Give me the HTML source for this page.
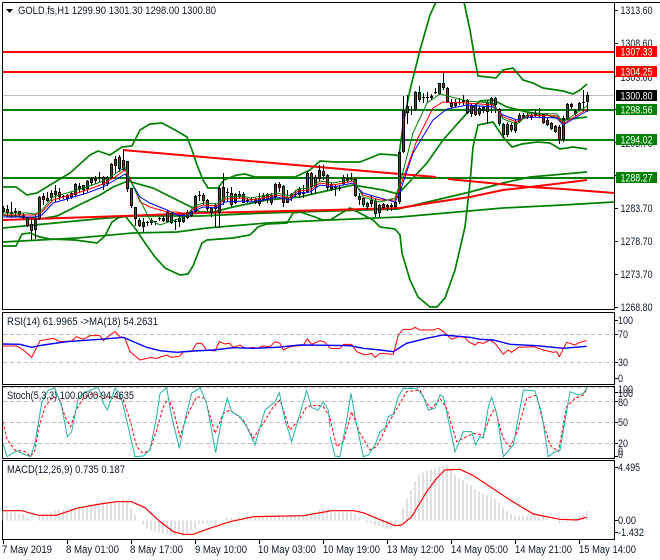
<!DOCTYPE html>
<html><head><meta charset="utf-8"><title>GOLD.fs H1</title>
<style>
html,body{margin:0;padding:0;background:#fff;width:660px;height:560px;overflow:hidden}
svg{display:block}
text{font-family:"Liberation Sans",sans-serif;font-size:11px;fill:#0a1a2a}
.w text{fill:#fff}
.n{fill:none;vector-effect:non-scaling-stroke}
</style></head><body>
<svg width="660" height="560" viewBox="0 0 660 560" xmlns="http://www.w3.org/2000/svg">
<defs><clipPath id="m"><rect x="3" y="3" width="611" height="306"/></clipPath>
<clipPath id="s"><rect x="3" y="387" width="611" height="71"/></clipPath></defs>
<g clip-path="url(#m)" fill="none">
<path d="M3 95.5H614" stroke="#c0c0c0"/>
<path d="M3 52H614M3 72H614" stroke="#ff0000" stroke-width="2"/>
<path d="M3 110H614M3 140H614M3 178H614" stroke="#008000" stroke-width="2"/>
<g stroke="#008000" stroke-width="1.7">
<path d="M3 187L16 187L27 195L37 193L50 185L70 173L90 155L98 151L110 155L122 147L132 146L140 130L150 124L162 123L175 130L187 137L192 150L197 165L203 180L208 188L218 188L224 180L237 175L245 174L255 177L295 177L310 170L320 161L335 162L360 162L380 154L395 155L399 156L403 125L410 90L420 50L430 15L436 2M464 2L470 30L475 60L478 76L496 78L503 70L513 68L523 80L533 83L543 88L563 91L573 94L580 90L587 84"/>
<path d="M3 246L16 246L22 234L30 233L40 237L50 239L75 240L97 243L105 236L112 222L118 218L125 216L135 228L145 243L155 257L165 268L180 275L188 274L193 266L202 243L207 240L233 238L250 235L258 227L267 224L287 223L293 213L300 212L315 217L323 220L330 220L350 208L373 220L380 227L395 229L400 235L402 253L410 280L418 297L430 307L437 307L445 298L455 270L465 227L470 183L473 147L478 125L493 122L503 137L512 147L522 144L537 142L550 143L560 149L573 147L587 149"/>
<path d="M3 242L77 238L133 233L177 232L207 228L267 223L330 220L400 217L503 208L563 205L614 202"/>
<path d="M3 228L107 218L133 216L200 216L267 213L330 211L398 209L470 192L503 183L530 177L587 172"/>
<path d="M3 215L40 219L57 216L83 203L100 195L113 187L128 181L153 188L193 208L200 212L213 212L233 207L267 200L300 197L317 193L353 185L383 190L398 194L400 192L427 163L443 140L467 113L480 101L493 100L507 107L527 112L547 115L563 120L587 117"/>
</g>
<g stroke="#ff0000" stroke-width="2">
<path d="M123 150L330 168L400 174L436 177M448 179L500 184L530 187L563 189L614 193"/>
<path d="M3 220L123 216L200 213L330 210L400 208L430 203L470 197L503 190L530 187L563 183L587 180"/>
</g>
<g shape-rendering="crispEdges">
<path stroke="#000" d="M3.5 206V213M7.5 205V217M11.5 202V218M15.5 208V217M19.5 211V217M23.5 213V219M27.5 217V227M31.5 218V240M35.5 215V239M39.5 196V220M43.5 193V205M47.5 192V202M51.5 190V201M55.5 185V202M59.5 188V200M63.5 195V199M67.5 194V201M71.5 192V199M75.5 183V196M79.5 183V193M83.5 185V195M87.5 180V192M91.5 177V185M95.5 176V184M99.5 172V182M103.5 176V190M107.5 176V186M111.5 163V179M115.5 156V173M119.5 155V172M123.5 149V171M127.5 161V192M131.5 188V208M135.5 207V226M139.5 218V227M143.5 218V232M147.5 221V226M151.5 218V225M155.5 221V225M159.5 217V221M163.5 216V222M167.5 210V223M171.5 213V224M175.5 219V230M179.5 215V227M183.5 213V223M187.5 210V219M191.5 210V217M195.5 195V213M199.5 191V201M203.5 193V205M207.5 199V213M211.5 207V217M215.5 203V227M219.5 187V228M223.5 173V205M227.5 188V202M231.5 187V207M235.5 193V204M239.5 191V199M243.5 192V203M247.5 198V203M251.5 197V201M255.5 198V204M259.5 193V206M263.5 193V201M267.5 193V203M271.5 193V205M275.5 183V199M279.5 182V192M283.5 185V207M287.5 190V203M291.5 193V201M295.5 190V197M299.5 187V198M303.5 185V198M307.5 171V193M311.5 172V195M315.5 175V194M319.5 165V182M323.5 165V180M327.5 174V191M331.5 183V191M335.5 185V196M339.5 185V191M343.5 175V185M347.5 174V183M351.5 173V182M355.5 178V197M359.5 193V205M363.5 197V207M367.5 202V210M371.5 195V207M375.5 199V217M379.5 204V217M383.5 203V210M387.5 204V211M391.5 203V211M395.5 201V209M399.5 151V204M403.5 96V153M407.5 95V124M411.5 106V115M415.5 91V111M419.5 86V102M423.5 93V103M427.5 92V102M431.5 94V100M435.5 88V94M439.5 83V95M443.5 72V90M447.5 87V103M451.5 99V109M455.5 99V108M459.5 98V105M463.5 95V105M467.5 99V114M471.5 103V117M475.5 103V116M479.5 106V116M483.5 106V113M487.5 100V124M491.5 97V113M495.5 97V113M499.5 108V126M503.5 123V138M507.5 122V137M511.5 123V132M515.5 120V133M519.5 113V123M523.5 113V119M527.5 113V119M531.5 112V120M535.5 109V117M539.5 108V118M543.5 113V124M547.5 118V126M551.5 122V130M555.5 125V133M559.5 125V144M563.5 116V142M567.5 103V120M571.5 103V109M575.5 109V116M579.5 102V111M583.5 90V112M587.5 92V112"/>
<path stroke="#000" stroke-width="3" d="M3.5 208V212M7.5 209V213M11.5 212V214M15.5 211V213M19.5 211V215M23.5 215V218M27.5 217V226M31.5 224V231M35.5 219V230M39.5 197V219M43.5 196V200M47.5 198V201M51.5 193V198M55.5 191V195M59.5 192V197M63.5 196V197M67.5 195V199M71.5 193V197M75.5 184V195M79.5 186V189M83.5 185V190M87.5 181V189M91.5 178V183M95.5 178V181M99.5 177V178M103.5 177V185M107.5 177V184M111.5 164V178M115.5 159V166M119.5 157V169M123.5 160V170M127.5 161V189M131.5 188V206M135.5 207V219M139.5 220V226M143.5 222V227M147.5 222V223M151.5 220V223M155.5 221V222M159.5 218V219M163.5 218V221M167.5 212V222M171.5 213V223M175.5 221V222M179.5 218V222M183.5 213V222M187.5 212V218M191.5 212V216M195.5 196V212M199.5 195V196M203.5 195V201M207.5 200V209M211.5 208V213M215.5 205V209M219.5 188V213M223.5 187V202M227.5 192V193M231.5 193V205M235.5 194V203M239.5 194V197M243.5 194V203M247.5 200V201M251.5 199V200M255.5 199V203M259.5 198V204M263.5 195V200M267.5 194V200M271.5 195V203M275.5 184V197M279.5 184V188M283.5 186V203M287.5 197V203M291.5 194V197M295.5 194V195M299.5 189V195M303.5 192V194M307.5 173V192M311.5 173V187M315.5 177V187M319.5 170V179M323.5 171V176M327.5 175V188M331.5 184V189M335.5 187V188M339.5 188V189M343.5 177V184M347.5 178V181M351.5 178V180M355.5 179V196M359.5 196V200M363.5 198V205M367.5 203V207M371.5 200V204M375.5 201V214M379.5 205V213M383.5 204V208M387.5 205V207M391.5 205V207M395.5 202V207M399.5 152V202M403.5 110V152M407.5 106V113M415.5 92V110M419.5 92V100M423.5 97V98M427.5 97V98M431.5 96V98M435.5 92V93M439.5 83V94M443.5 83V88M447.5 88V102M451.5 103V107M455.5 102V106M459.5 102V103M463.5 100V102M467.5 100V113M471.5 105V114M475.5 105V115M479.5 108V114M483.5 107V111M487.5 102V112M491.5 98V105M495.5 98V105M499.5 109V124M503.5 124V135M507.5 124V135M511.5 125V130M515.5 122V131M519.5 115V122M523.5 115V118M527.5 115V117M531.5 115V118M535.5 113V116M539.5 115V116M543.5 114V123M547.5 120V125M551.5 123V129M555.5 126V132M559.5 127V140M563.5 118V140M567.5 104V119M571.5 104V107M575.5 111V114M579.5 103V110M583.5 102V103M587.5 95V102"/>
<path stroke="#0a6a1a" d="M3.5 209V211M11.5 213V213M15.5 212V212M35.5 220V229M39.5 198V218M47.5 199V200M51.5 194V197M55.5 192V194M63.5 196V196M71.5 194V196M75.5 185V194M79.5 187V188M83.5 186V189M87.5 182V188M91.5 179V182M95.5 179V180M111.5 165V177M115.5 160V165M123.5 161V169M143.5 223V226M151.5 221V222M163.5 219V220M167.5 213V221M179.5 219V221M183.5 214V221M191.5 213V215M195.5 197V211M215.5 206V208M219.5 189V212M235.5 195V202M239.5 195V196M259.5 199V203M263.5 196V199M271.5 196V202M275.5 185V196M287.5 198V202M291.5 195V196M299.5 190V194M307.5 174V191M315.5 178V186M319.5 171V178M343.5 178V183M347.5 179V180M351.5 179V179M371.5 201V203M379.5 206V212M395.5 203V206M399.5 153V201M403.5 111V151M407.5 107V112M415.5 93V109M439.5 84V93M451.5 104V106M463.5 101V101M471.5 106V113M479.5 109V113M483.5 108V110M487.5 103V111M491.5 99V104M507.5 125V134M515.5 123V130M519.5 116V121M563.5 119V139M567.5 105V118M579.5 104V109M587.5 96V101"/>
<path stroke="#f00000" d="M7.5 210V212M19.5 212V214M23.5 216V217M27.5 218V225M31.5 225V230M43.5 197V199M59.5 193V196M67.5 196V198M103.5 178V184M107.5 178V183M119.5 158V168M127.5 162V188M131.5 189V205M135.5 208V218M139.5 221V225M171.5 214V222M187.5 213V217M203.5 196V200M207.5 201V208M211.5 209V212M223.5 188V201M231.5 194V204M243.5 195V202M255.5 200V202M267.5 195V199M279.5 185V187M283.5 187V202M311.5 174V186M323.5 172V175M327.5 176V187M331.5 185V188M355.5 180V195M359.5 197V199M363.5 199V204M367.5 204V206M375.5 202V213M383.5 205V207M419.5 93V99M443.5 84V87M447.5 89V101M455.5 103V105M467.5 101V112M475.5 106V114M495.5 99V104M499.5 110V123M503.5 125V134M511.5 126V129M523.5 116V117M531.5 116V117M543.5 115V122M547.5 121V124M551.5 124V128M555.5 127V131M559.5 128V139M571.5 105V106M575.5 112V113"/>
</g>
<path d="M3 217L27 217L35 217L42 215L53 203L67 199L87 193L103 187L115 180L125 174L130 180L140 197L150 203L167 210L177 215L187 216L193 211L203 207L217 208L225 202L243 201L250 202L263 200L277 197L290 200L298 193L310 192L320 185L333 187L353 183L363 193L380 198L395 202L400 192L413 153L433 120L447 109L467 105L493 107L503 115L517 120L530 117L557 118L563 125L587 111" stroke="#0000ff"/>
<path d="M3 215L27 215L35 215L42 212L53 200L67 196L87 190L103 184L115 177L125 170L130 178L140 202L150 207L167 212L177 212L187 214L193 209L203 205L217 206L225 199L243 198L250 200L263 198L277 195L290 198L298 191L310 190L320 183L333 185L353 181L363 195L380 200L395 200L400 187L417 140L433 108L443 102L467 103L493 105L503 117L517 122L530 115L557 116L563 124L587 109" stroke="#ff0000"/>
<path d="M3 213L27 213L35 214L42 210L53 197L67 193L87 187L103 181L115 174L125 167L130 180L150 220L160 225L187 216L193 207L203 203L217 204L225 197L243 196L250 198L263 196L277 193L290 196L298 189L310 188L320 181L333 183L353 179L363 197L380 202L395 198L400 183L413 133L427 103L440 94L467 101L493 103L503 119L517 124L530 113L557 114L563 122L587 106" stroke="#008000"/>
</g>

<g shape-rendering="crispEdges" fill="none" stroke="#000">
<path d="M2.5 2.5H660M2.5 2.5V309.5H614.5M614.5 2.5V309.5"/>
<path d="M2.5 312.5H614.5V384.5H2.5ZM2.5 386.5H614.5V458.5H2.5ZM2.5 460.5H614.5V539.5H2.5Z"/>
<path d="M3.5 539V544M67.5 539V544M131.5 539V544M195.5 539V544M259.5 539V544M323.5 539V544M387.5 539V544M451.5 539V544M515.5 539V544M579.5 539V544"/>
<path d="M614 10.5H618M614 43.5H618M614 76.5H618M614 109.5H618M614 142.5H618M614 175.5H618M614 208.5H618M614 241.5H618M614 274.5H618M614 307.5H618M614 320.5H618M614 334.5H618M614 362.5H618M614 378.5H618M614 392.5H618M614 401.5H618M614 422.5H618M614 443.5H618M614 456.5H618M614 467.5H618M614 520.5H618M614 532.5H618"/>
</g>

<g stroke="#c0c0c0" stroke-dasharray="4 3" shape-rendering="crispEdges" fill="none">
<path d="M3 334.5H614M3 362.5H614M3 387.5H614M3 401.5H614M3 422.5H614M3 443.5H614"/>
</g>

<!-- RSI -->
<g transform="translate(0,310) scale(.33333)" fill="none">
<path class="n" stroke="#ff0000" d="M8 108L50 108L70 120L95 142L120 92L160 85L180 95L215 93L230 80L250 88L270 77L300 77L310 92L330 75L345 65L360 80L375 85L390 125L420 150L450 143L470 145L500 135L515 142L540 138L550 125L575 125L590 100L605 100L620 120L645 123L658 95L675 102L688 100L700 112L720 105L735 115L760 112L770 115L790 108L810 110L825 95L840 100L850 120L870 110L890 108L910 105L922 87L935 103L960 92L975 97L990 115"/>
<path class="n" stroke="#0000ff" stroke-width="1.4" d="M8 102L60 103L95 112L130 105L200 95L300 88L370 82L400 95L440 112L480 122L530 127L580 123L640 120L700 113L760 115L830 112L900 105L990 106"/>
</g>
<g transform="translate(330,310) scale(.33333)" fill="none">
<path class="n" stroke="#ff0000" d="M0 115L30 115L40 103L65 103L80 125L105 135L125 130L135 142L150 130L190 133L205 75L220 58L245 58L255 52L270 60L310 60L325 55L340 65L365 88L385 80L405 82L415 95L435 105L445 97L460 100L480 90L495 100L520 133L535 120L545 127L565 112L610 110L640 120L670 127L680 125L688 140L710 97L735 105L750 97L770 92"/>
<path class="n" stroke="#0000ff" stroke-width="1.4" d="M0 106L60 107L100 115L150 120L190 125L230 100L290 85L340 75L420 82L450 88L490 90L540 103L620 107L700 115L770 109"/>
</g>

<!-- Stoch -->
<g clip-path="url(#s)">
<g transform="translate(0,310) scale(.33333)" fill="none">
<path class="n" stroke="#ff0000" stroke-dasharray="3 2" d="M8 335L22 390L45 420L75 425L92 440L105 420L115 360L135 290L160 260L180 270L195 320L212 350L228 300L250 265L280 250L310 265L340 260L370 270L390 330L410 410L430 430L450 420L470 360L490 290L505 265L520 300L540 380L560 320L590 260L615 265L645 370L670 310L690 300L730 330L760 385L790 340L820 290L840 270L870 360L900 325L920 290L950 285L970 290L990 320"/>
<path class="n" stroke="#20b2aa" stroke-width="1" d="M8 400L22 440L50 422L70 432L92 440L105 400L125 280L145 240L165 235L185 290L202 380L215 365L235 265L250 250L280 237L295 232L310 280L322 300L345 235L360 250L380 330L405 440L430 438L450 420L470 320L480 250L500 233L515 320L538 415L555 330L575 250L600 233L620 280L647 428L665 330L682 265L695 305L720 320L740 350L765 405L795 300L825 275L838 248L855 330L875 395L900 310L920 242L935 293L955 300L970 275L985 300L990 350"/>
</g>
<g transform="translate(330,310) scale(.33333)" fill="none">
<path class="n" stroke="#ff0000" stroke-dasharray="3 2" d="M0 325L20 410L40 395L65 305L90 370L120 420L140 410L175 340L210 280L230 245L270 240L290 280L305 295L330 265L350 295L380 395L410 380L430 370L460 375L480 320L495 295L515 370L525 395L540 410L560 370L590 265L620 255L640 340L660 405L685 425L710 290L735 265L760 255L772 235"/>
<path class="n" stroke="#20b2aa" stroke-width="1" d="M0 380L15 438L30 440L50 330L63 250L75 320L100 440L115 435L135 405L150 365L165 355L175 320L190 312L205 260L220 235L260 235L280 260L295 300L315 295L330 255L340 260L355 330L375 425L400 365L425 365L437 405L450 378L460 385L475 290L485 262L500 310L520 440L550 405L580 240L615 243L635 310L655 440L675 425L690 420L720 245L745 255L760 250L772 233"/>
</g>
</g>

<!-- MACD -->
<g transform="translate(0,310) scale(.33333)" fill="none">
<path class="n" stroke="#c0c0c0" shape-rendering="crispEdges" d="M9 632V603M21 632V605M33 632V607M45 632V607M57 632V610M69 632V612M81 632V622M93 632V630M117 632V618M129 632V616M141 632V612M153 632V607M165 632V602M177 632V598M189 632V598M201 632V598M213 632V596M225 632V592M237 632V590M249 632V588M261 632V586M273 632V584M285 632V582M297 632V580M309 632V578M321 632V578M333 632V575M345 632V572M357 632V570M369 632V568M381 632V572M393 632V595M405 632V615M417 632V630M429 632V645M441 632V655M453 632V660M465 632V665M477 632V668M489 632V672M501 632V672M513 632V674M525 632V675M537 632V672M549 632V672M561 632V668M573 632V660M585 632V655M597 632V642M609 632V640M621 632V640M633 632V638M645 632V640M669 632V630M681 632V622M693 632V622M705 632V625M717 632V625M729 632V622M741 632V620M753 632V620M765 632V620M777 632V618M789 632V620M801 632V620M813 632V618M825 632V618M837 632V614M849 632V617M861 632V617M873 632V615M885 632V615M897 632V615M909 632V615M921 632V610M933 632V608M945 632V605M957 632V600M969 632V596M981 632V598"/>
<path class="n" stroke="#ff0000" stroke-width="1.2" d="M8 602L65 602L115 616L170 616L230 595L300 582L350 575L395 575L435 593L480 635L520 665L550 673L580 673L620 658L690 635L760 620L910 617L990 603"/>
</g>
<g transform="translate(330,310) scale(.33333)" fill="none">
<path class="n" stroke="#c0c0c0" shape-rendering="crispEdges" d="M3 632V607M15 632V607M27 632V608M39 632V608M51 632V608M63 632V608M75 632V612M87 632V622M111 632V638M123 632V640M135 632V648M147 632V650M159 632V652M171 632V655M183 632V655M195 632V650M219 632V593M231 632V565M243 632V540M255 632V515M267 632V495M279 632V488M291 632V482M303 632V478M315 632V475M327 632V470M339 632V468M351 632V470M363 632V480M375 632V495M387 632V505M399 632V510M411 632V522M423 632V527M435 632V538M447 632V545M459 632V550M471 632V555M483 632V560M495 632V565M507 632V578M519 632V593M531 632V603M543 632V612M555 632V618M567 632V618M579 632V618M591 632V618M603 632V618M615 632V618M627 632V622M639 632V622M651 632V625M675 632V635M687 632V640M699 632V638M711 632V635M723 632V628M735 632V622M747 632V618M759 632V613M771 632V603"/>
<path class="n" stroke="#ff0000" stroke-width="1.2" d="M0 602L70 602L100 608L140 625L195 647L215 645L245 620L290 545L320 505L345 480L390 478L430 497L480 530L540 570L610 612L690 628L740 630L770 622"/>
</g>

<!-- Header -->
<path d="M6 9H13L9.5 13Z" fill="#000"/>
<text x="18" y="14" textLength="198" lengthAdjust="spacingAndGlyphs">GOLD.fs,H1  1299.90 1301.30 1298.00 1300.80</text>
<text x="7" y="325" textLength="151" lengthAdjust="spacingAndGlyphs">RSI(14) 61.9965  -&gt;MA(18) 54.2631</text>
<text x="7" y="399" textLength="127" lengthAdjust="spacingAndGlyphs">Stoch(5,3,3) 100.0000 94.4635</text>
<text x="7" y="473" textLength="118" lengthAdjust="spacingAndGlyphs">MACD(12,26,9) 0.735 0.187</text>

<!-- Price axis -->
<g>
<text x="620.5" y="14" textLength="32" lengthAdjust="spacingAndGlyphs">1313.60</text>
<text x="620.5" y="47" textLength="32" lengthAdjust="spacingAndGlyphs">1308.60</text>
<text x="620.5" y="81" textLength="32" lengthAdjust="spacingAndGlyphs">1303.60</text>
<text x="620.5" y="147" textLength="32" lengthAdjust="spacingAndGlyphs">1293.70</text>
<text x="620.5" y="212" textLength="32" lengthAdjust="spacingAndGlyphs">1283.70</text>
<text x="620.5" y="245" textLength="32" lengthAdjust="spacingAndGlyphs">1278.70</text>
<text x="620.5" y="278" textLength="32" lengthAdjust="spacingAndGlyphs">1273.70</text>
<text x="620.5" y="311" textLength="32" lengthAdjust="spacingAndGlyphs">1268.80</text>
</g>
<g shape-rendering="crispEdges">
<rect x="616" y="46" width="41" height="11" fill="#ff0000"/>
<rect x="616" y="66" width="41" height="11" fill="#ff0000"/>
<rect x="616" y="90" width="41" height="11" fill="#000"/>
<rect x="616" y="104" width="41" height="11" fill="#008000"/>
<rect x="616" y="134" width="41" height="11" fill="#008000"/>
<rect x="616" y="172" width="41" height="11" fill="#008000"/>
</g>
<g class="w">
<text x="620.5" y="55.5" textLength="32" lengthAdjust="spacingAndGlyphs">1307.33</text>
<text x="620.5" y="75.5" textLength="32" lengthAdjust="spacingAndGlyphs">1304.25</text>
<text x="620.5" y="99.5" textLength="32" lengthAdjust="spacingAndGlyphs">1300.80</text>
<text x="620.5" y="113.5" textLength="32" lengthAdjust="spacingAndGlyphs">1298.56</text>
<text x="620.5" y="143.5" textLength="32" lengthAdjust="spacingAndGlyphs">1294.02</text>
<text x="620.5" y="181.5" textLength="32" lengthAdjust="spacingAndGlyphs">1288.27</text>
</g>

<!-- Indicator axes -->
<text x="618" y="324" textLength="15" lengthAdjust="spacingAndGlyphs">100</text>
<text x="618" y="338" textLength="10" lengthAdjust="spacingAndGlyphs">70</text>
<text x="618" y="366" textLength="10" lengthAdjust="spacingAndGlyphs">30</text>
<text x="618" y="382" textLength="5" lengthAdjust="spacingAndGlyphs">0</text>
<text x="618" y="393" textLength="15" lengthAdjust="spacingAndGlyphs">100</text>
<text x="618" y="397" textLength="15" lengthAdjust="spacingAndGlyphs">100</text>
<text x="618" y="406" textLength="10" lengthAdjust="spacingAndGlyphs">80</text>
<text x="618" y="426" textLength="10" lengthAdjust="spacingAndGlyphs">50</text>
<text x="618" y="447" textLength="10" lengthAdjust="spacingAndGlyphs">20</text>
<text x="618" y="455" textLength="5" lengthAdjust="spacingAndGlyphs">0</text>
<text x="618" y="458" textLength="5" lengthAdjust="spacingAndGlyphs">0</text>
<text x="618" y="471" textLength="22" lengthAdjust="spacingAndGlyphs">4.495</text>
<text x="618" y="524" textLength="18" lengthAdjust="spacingAndGlyphs">0.00</text>
<text x="618" y="536" textLength="26" lengthAdjust="spacingAndGlyphs">-1.432</text>

<!-- Time axis -->
<text x="2" y="553" textLength="50" lengthAdjust="spacingAndGlyphs">7 May 2019</text>
<text x="66" y="553" textLength="53" lengthAdjust="spacingAndGlyphs">8 May 01:00</text>
<text x="130" y="553" textLength="53" lengthAdjust="spacingAndGlyphs">8 May 17:00</text>
<text x="195" y="553" textLength="52" lengthAdjust="spacingAndGlyphs">9 May 10:00</text>
<text x="258" y="553" textLength="58" lengthAdjust="spacingAndGlyphs">10 May 03:00</text>
<text x="323" y="553" textLength="57" lengthAdjust="spacingAndGlyphs">10 May 19:00</text>
<text x="387" y="553" textLength="57" lengthAdjust="spacingAndGlyphs">13 May 12:00</text>
<text x="451" y="553" textLength="57" lengthAdjust="spacingAndGlyphs">14 May 05:00</text>
<text x="515" y="553" textLength="57" lengthAdjust="spacingAndGlyphs">14 May 21:00</text>
<text x="579" y="553" textLength="57" lengthAdjust="spacingAndGlyphs">15 May 14:00</text>
</svg>
</body></html>
